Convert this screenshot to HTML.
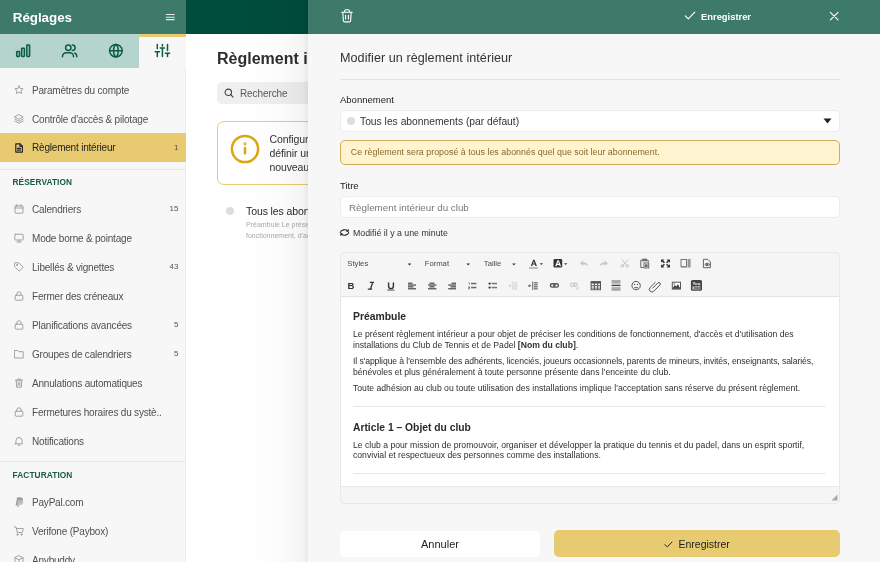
<!DOCTYPE html>
<html><head><meta charset="utf-8">
<style>
*{box-sizing:border-box;margin:0;padding:0}
html,body{width:880px;height:562px;overflow:hidden;background:#fff;-webkit-font-smoothing:antialiased;font-family:"Liberation Sans",sans-serif;color:#333}
.abs{position:absolute}
svg{display:block}
/* sidebar */
#sb{will-change:transform;position:absolute;left:0;top:0;width:186px;height:562px;background:#f7f7f7;border-right:1px solid #ececec}
#sbh{position:absolute;left:0;top:0;width:186px;height:34px;background:#3d7a6a}
#sbh .t{position:absolute;left:12.8px;top:9.6px;font-size:13.4px;font-weight:bold;color:#fff;letter-spacing:-0.05px}
#tabs{position:absolute;left:0;top:34px;width:186px;height:34px;background:#b5d5cc}
#tabs .act{position:absolute;left:139px;top:0;width:47px;height:34px;background:#f7f7f7;border-top:3px solid #e8ca70}
.it{position:absolute;left:0;width:186px;height:29px}
.it .ic{position:absolute;left:14px;top:9px;width:10px;height:10px}
.it .tx{position:absolute;left:32px;top:9px;font-size:10px;letter-spacing:-0.2px;color:#505050;white-space:nowrap}
.it .n{position:absolute;right:7.5px;top:9.5px;font-size:8px;color:#555}
.it.on{background:#e8ca70}
.it.on .tx{color:#222}
.sec{position:absolute;left:12.5px;font-size:8.3px;font-weight:bold;color:#175a4a;letter-spacing:0.1px}
.sep{position:absolute;left:0;width:186px;height:1px;background:#e6e6e6}
/* main */
#mh{position:absolute;left:186px;top:0;width:122px;height:34px;background:#004d3d}
#main{will-change:transform;position:absolute;left:187px;top:34px;width:121px;height:528px;background:#fff;overflow:hidden}
/* modal */
#shadow{position:absolute;left:248px;top:0;width:60px;height:562px;background:linear-gradient(to right,rgba(0,0,0,0) 0px,rgba(0,0,0,0.008) 20px,rgba(0,0,0,0.02) 36px,rgba(0,0,0,0.035) 50px,rgba(0,0,0,0.045) 55px,rgba(0,0,0,0.075) 58px,rgba(0,0,0,0.09) 60px)}
#modal{will-change:transform;position:absolute;left:308px;top:0;width:572px;height:562px;background:#f7f7f7;overflow:hidden}
#mhd{position:absolute;left:0;top:0;width:572px;height:34px;background:#3d7a6a}
.lbl{position:absolute;left:32px;font-size:9.5px;color:#222}
.cl{font-size:8.65px;line-height:10.5px;white-space:nowrap;color:#303030}
.box{position:absolute;left:32px;width:500px;background:#fff;border:1px solid #ececec;border-radius:5px}
</style></head><body>

<!-- SIDEBAR -->
<div id="sb">
  <div id="sbh"><div class="t">Réglages</div>
    <svg class="abs" style="left:165px;top:12px" width="10" height="10" viewBox="0 0 10 10"><path d="M1.3 2.5h8M1.3 5.3h8M1.3 7.6h8" stroke="#fff" stroke-width="1.1" stroke-linecap="round" opacity="0.85"/></svg>
  </div>
  <div id="tabs">
    <div class="act"></div>
    <svg class="abs" style="left:0;top:0" width="186" height="34" viewBox="0 34 186 34" fill="none" stroke="#0e5a4a" stroke-width="1.5" stroke-linecap="round" stroke-linejoin="round">
      <rect x="16.7" y="51.6" width="2.8" height="4.8" rx="0.6" fill="#9cc4b8"/>
      <rect x="21.6" y="48.2" width="2.8" height="8.2" rx="0.6" fill="#9cc4b8"/>
      <rect x="26.8" y="44.9" width="2.8" height="11.5" rx="0.6" fill="#9cc4b8"/>
      <circle cx="68.3" cy="47.7" r="2.7"/>
      <path d="M62.5 56.7v-0.4a3.6 3.6 0 0 1 3.6-3.6h3.8a3.6 3.6 0 0 1 3.6 3.6v0.4"/>
      <path d="M72.4 45a2.7 2.7 0 0 1 0 5.4"/>
      <path d="M74.8 53a3.3 3.3 0 0 1 2 3.2v0.5"/>
      <circle cx="115.9" cy="50.7" r="6.3"/>
      <path d="M109.6 50.7h12.6"/>
      <path d="M115.9 44.4c-3.1 2.2-3.1 10.4 0 12.6c3.1-2.2 3.1-10.4 0-12.6"/>
      <path d="M157.3 44.5v4.2M157.3 51.8v4.8M155.2 51.8h4.2" />
      <path d="M162.4 44.5v1.4M162.4 48v8.6M160.3 48h4.2"/>
      <path d="M167.5 44.5v6M167.5 53.3v3.3M165.4 53.3h4.2"/>
    </svg>
  </div>
  <div class="it" style="top:75.5px"><svg class="ic" viewBox="0 0 10 10" width="10" height="10" fill="none" stroke="#999" stroke-width="0.9" stroke-linecap="round" stroke-linejoin="round"><path d="M5 0.8l1.25 2.6 2.85 0.35-2.1 1.95 0.55 2.8L5 7.1 2.45 8.5 3 5.7 0.9 3.75l2.85-0.35z"/></svg><div class="tx">Paramètres du compte</div></div>
  <div class="it" style="top:104.5px"><svg class="ic" viewBox="0 0 10 10" width="10" height="10" fill="none" stroke="#999" stroke-width="0.9" stroke-linecap="round" stroke-linejoin="round"><path d="M5 0.8L9.2 3 5 5.2 0.8 3z"/><path d="M0.8 5L5 7.2 9.2 5"/><path d="M0.8 7L5 9.2 9.2 7"/></svg><div class="tx">Contrôle d'accès & pilotage</div></div>
  <div class="it on" style="top:133px;height:29px"><svg class="ic" style="top:9.5px" viewBox="0 0 10 10" width="10" height="10" fill="none" stroke="#222" stroke-width="1.15" stroke-linecap="round" stroke-linejoin="round"><path d="M1.8 0.9h4.3l2.3 2.3v5.9h-6.6z"/><path d="M5.9 0.9v2.4h2.4"/><path d="M3.5 5.4h3M3.5 7.1h3"/></svg><div class="tx" style="color:#222;top:9px">Règlement intérieur</div><div class="n">1</div></div>
  <div class="it" style="top:194.5px"><svg class="ic" viewBox="0 0 10 10" width="10" height="10" fill="none" stroke="#999" stroke-width="0.9" stroke-linecap="round" stroke-linejoin="round"><rect x="1" y="1.8" width="8" height="7.4" rx="1"/><path d="M1 4h8M3 0.6v2M7 0.6v2"/></svg><div class="tx">Calendriers</div><div class="n">15</div></div>
  <div class="it" style="top:223.5px"><svg class="ic" viewBox="0 0 10 10" width="10" height="10" fill="none" stroke="#999" stroke-width="0.9" stroke-linecap="round" stroke-linejoin="round"><rect x="0.8" y="1.2" width="8.4" height="5.8" rx="0.8"/><path d="M5 7v1.8M3 9h4"/></svg><div class="tx">Mode borne & pointage</div></div>
  <div class="it" style="top:252.5px"><svg class="ic" viewBox="0 0 10 10" width="10" height="10" fill="none" stroke="#999" stroke-width="0.9" stroke-linecap="round" stroke-linejoin="round"><path d="M0.8 0.8h4l4.4 4.4-4 4L0.8 4.8z"/><circle cx="3" cy="3" r="0.6"/></svg><div class="tx">Libellés & vignettes</div><div class="n">43</div></div>
  <div class="it" style="top:281.5px"><svg class="ic" viewBox="0 0 10 10" width="10" height="10" fill="none" stroke="#999" stroke-width="0.9" stroke-linecap="round" stroke-linejoin="round"><rect x="1.2" y="4.2" width="7.6" height="5" rx="0.8"/><path d="M2.8 4.2V3a2.2 2.2 0 0 1 4.4 0v1.2"/></svg><div class="tx">Fermer des créneaux</div></div>
  <div class="it" style="top:310.5px"><svg class="ic" viewBox="0 0 10 10" width="10" height="10" fill="none" stroke="#999" stroke-width="0.9" stroke-linecap="round" stroke-linejoin="round"><rect x="1.2" y="4.2" width="7.6" height="5" rx="0.8"/><path d="M2.8 4.2V3a2.2 2.2 0 0 1 4.4 0v1.2"/></svg><div class="tx">Planifications avancées</div><div class="n">5</div></div>
  <div class="it" style="top:339.5px"><svg class="ic" viewBox="0 0 10 10" width="10" height="10" fill="none" stroke="#999" stroke-width="0.9" stroke-linecap="round" stroke-linejoin="round"><path d="M0.8 1.5h3l1 1.2h4.4v6.3H0.8z"/></svg><div class="tx">Groupes de calendriers</div><div class="n">5</div></div>
  <div class="it" style="top:368.5px"><svg class="ic" viewBox="0 0 10 10" width="10" height="10" fill="none" stroke="#999" stroke-width="0.9" stroke-linecap="round" stroke-linejoin="round"><path d="M1.5 2.2h7M3.7 2.2V1h2.6v1.2M2.2 2.2l0.4 7h4.8l0.4-7M4.2 4v3.5M5.8 4v3.5"/></svg><div class="tx">Annulations automatiques</div></div>
  <div class="it" style="top:397.5px"><svg class="ic" viewBox="0 0 10 10" width="10" height="10" fill="none" stroke="#999" stroke-width="0.9" stroke-linecap="round" stroke-linejoin="round"><rect x="1.2" y="4.2" width="7.6" height="5" rx="0.8"/><path d="M2.8 4.2V3a2.2 2.2 0 0 1 4.4 0v1.2"/></svg><div class="tx">Fermetures horaires du systè..</div></div>
  <div class="it" style="top:426.5px"><svg class="ic" viewBox="0 0 10 10" width="10" height="10" fill="none" stroke="#999" stroke-width="0.9" stroke-linecap="round" stroke-linejoin="round"><path d="M2 7V4.5a3 3 0 0 1 6 0V7l0.8 0.8H1.2z"/><path d="M4 9.2h2"/></svg><div class="tx">Notifications</div></div>
  <div class="it" style="top:487.5px"><svg class="ic" viewBox="0 0 10 10" width="10" height="10"><path d="M1.6 8.6L3.1 0.2H6.4C8.4 0.2 9.3 1.3 9 3C8.7 4.9 7.4 5.7 5.6 5.7H4.5L4 8.6Z" fill="#a0a0a0"/><path d="M2.9 9.9L4.1 3.2H7C8.8 3.2 9.6 4.1 9.3 5.6C9 7.2 7.9 7.9 6.3 7.9H5.3L4.9 9.9Z" fill="#bdbdbd" opacity="0.9"/></svg><div class="tx">PayPal.com</div></div>
  <div class="it" style="top:516.5px"><svg class="ic" viewBox="0 0 10 10" width="10" height="10" fill="none" stroke="#999" stroke-width="0.9" stroke-linecap="round" stroke-linejoin="round"><path d="M0.5 1h1.5l1.2 5.5h5L9.3 2.5H2.4"/><circle cx="3.5" cy="8.6" r="0.7"/><circle cx="7.5" cy="8.6" r="0.7"/></svg><div class="tx">Verifone (Paybox)</div></div>
  <div class="it" style="top:545.5px"><svg class="ic" viewBox="0 0 10 10" width="10" height="10" fill="none" stroke="#999" stroke-width="0.9" stroke-linecap="round" stroke-linejoin="round"><path d="M5 0.8l4 2v4.6l-4 2-4-2V2.8z"/><path d="M1 2.8l4 2 4-2M5 4.8v4.6"/></svg><div class="tx">Anybuddy</div></div>
  <div class="sep" style="top:169px"></div>
  <div class="sec" style="top:177px">RÉSERVATION</div>
  <div class="sep" style="top:461px"></div>
  <div class="sec" style="top:470px">FACTURATION</div>
</div>

<!-- MAIN -->
<div id="mh"></div>
<div id="main">
  <div class="abs" style="left:30px;top:15.5px;font-size:16px;font-weight:bold;color:#2e2e2e;white-space:nowrap;letter-spacing:0px">Règlement intérieur</div>
  <div class="abs" style="left:30px;top:48px;width:200px;height:22px;background:#efefef;border-radius:5px">
    <svg class="abs" style="left:7px;top:6px" width="10" height="10" viewBox="0 0 10 10" fill="none" stroke="#444" stroke-width="1.1" stroke-linecap="round"><circle cx="4.3" cy="4.3" r="3.2"/><path d="M6.7 6.7L9 9"/></svg>
    <div class="abs" style="left:23px;top:5.5px;font-size:10px;color:#5a5a5a;letter-spacing:-0.1px">Recherche</div>
  </div>
  <div class="abs" style="left:30px;top:87px;width:200px;height:64px;border:1px solid #e8ca70;border-radius:7px;background:#fff">
    <svg class="abs" style="left:12px;top:12px" width="30" height="30" viewBox="0 0 30 30" fill="none" stroke="#dba60f" stroke-width="2.5" stroke-linecap="round"><circle cx="15" cy="15" r="13.1"/><path d="M15 14v5.2"/><circle cx="15" cy="9.8" r="0.5" stroke-width="2.3"/></svg>
    <div class="abs" style="left:51.5px;top:10px;font-size:10.5px;line-height:14px;color:#333;white-space:nowrap;letter-spacing:-0.1px">Configurez<br>définir un<br>nouveau</div>
  </div>
  <div class="abs" style="left:39px;top:173px;width:8px;height:8px;border-radius:50%;background:#ddd"></div>
  <div class="abs" style="left:59px;top:171px;font-size:10.5px;color:#2a2a2a;white-space:nowrap;letter-spacing:-0.1px">Tous les abonnements</div>
  <div class="abs" style="left:59px;top:186px;font-size:7px;line-height:10.8px;color:#aaa;white-space:nowrap">Préambule Le présent<br>fonctionnement, d'accès</div>
</div>

<!-- MODAL -->
<div id="shadow"></div>
<div id="modal">
  <div id="mhd">
    <svg class="abs" style="left:33px;top:9px" width="12" height="14" viewBox="0 0 12 14" fill="none" stroke="#fff" stroke-width="1.1" stroke-linecap="round" stroke-linejoin="round"><path d="M0.7 3.2h10.6M3.6 3.2V2a1.2 1.2 0 0 1 1.2-1.2h2.4A1.2 1.2 0 0 1 8.4 2v1.2M1.8 3.2l0.6 8.6a1.2 1.2 0 0 0 1.2 1.1h4.8a1.2 1.2 0 0 0 1.2-1.1l0.6-8.6M4.6 6.2v3.8M7.4 6.2v3.8"/></svg>
    <svg class="abs" style="left:376px;top:11px" width="12" height="9" viewBox="0 0 12 9" fill="none" stroke="#fff" stroke-width="1.15" stroke-linecap="round" stroke-linejoin="round"><path d="M1.3 4.8l3 3L10.8 1.2"/></svg>
    <div class="abs" style="left:393px;top:11px;font-size:9.4px;font-weight:bold;color:#fff;letter-spacing:0px">Enregistrer</div>
    <svg class="abs" style="left:521px;top:11px" width="10" height="10" viewBox="0 0 10 10" fill="none" stroke="#fff" stroke-width="1.1" stroke-linecap="round"><path d="M1.4 1.3l7.6 7.6M9 1.3L1.4 8.9"/></svg>
  </div>
  <div class="abs" style="left:32px;top:50.7px;font-size:12.6px;color:#333;white-space:nowrap;letter-spacing:0.05px">Modifier un règlement intérieur</div>
  <div class="abs" style="left:32px;top:79px;width:500px;height:1px;background:#e2e2e2"></div>
  <div class="lbl" style="top:93.5px">Abonnement</div>
  <div class="box" style="top:109.5px;height:22px">
    <div class="abs" style="left:6.3px;top:6.5px;width:8px;height:8px;border-radius:50%;background:#ddd"></div>
    <div class="abs" style="left:19px;top:5.5px;font-size:10.3px;color:#333;white-space:nowrap">Tous les abonnements (par défaut)</div>
    <svg class="abs" style="left:482px;top:7px" width="9" height="6" viewBox="0 0 9 6"><path d="M0.5 0.5h8L4.5 5.5z" fill="#222"/></svg>
  </div>
  <div class="abs" style="left:32px;top:139.5px;width:500px;height:25px;background:#fff4cf;border:1.7px solid #d2a95a;border-radius:5px">
    <div class="abs" style="left:9.8px;top:6.6px;font-size:8.9px;color:#8a6a2c;white-space:nowrap">Ce règlement sera proposé à tous les abonnés quel que soit leur abonnement.</div>
  </div>
  <div class="lbl" style="top:180px">Titre</div>
  <div class="box" style="top:196px;height:22px">
    <div class="abs" style="left:8px;top:5px;font-size:9.8px;color:#777;white-space:nowrap">Règlement intérieur du club</div>
  </div>
  <svg class="abs" style="left:31px;top:227.5px" width="11" height="9" viewBox="0 0 11 9"><g fill="none" stroke="#222" stroke-width="1.05" stroke-linecap="round"><path d="M1.3 4.6C1.8 1.9 6.6 0.6 8.8 2.9"/><path d="M9.7 4.4C9.2 7.1 4.4 8.4 2.2 6.1"/></g><path d="M9.9 0.9L9.5 3.9L6.6 3.3z" fill="#222"/><path d="M1.1 8.1L1.5 5.1L4.4 5.7z" fill="#222"/></svg>
  <div class="abs" style="left:45px;top:227.6px;font-size:8.8px;color:#333;white-space:nowrap">Modifié il y a une minute</div>
  <div id="ed" class="abs" style="left:32px;top:252px;width:500px;height:252px;border:1px solid #e8e8e8;border-radius:4px;background:#f5f5f5;overflow:hidden">
    
    <div class="abs" style="left:0;top:43px;width:498px;height:191px;background:#fff;border-top:1px solid #e4e4e4;border-bottom:1px solid #e9e9e9">
      <div id="content" style="position:absolute;left:12px;top:0;width:480px;color:#2a2a2a">
        <div class="abs" style="top:13.5px;font-size:10.4px;font-weight:bold;white-space:nowrap">Préambule</div>
        <div class="abs cl" style="top:32px">Le présent règlement intérieur a pour objet de préciser les conditions de fonctionnement, d'accès et d'utilisation des<br>installations du Club de Tennis et de Padel <b>[Nom du club]</b>.</div>
        <div class="abs cl" style="top:59px"><span style="letter-spacing:-0.095px">Il s'applique à l'ensemble des adhérents, licenciés, joueurs occasionnels, parents de mineurs, invités, enseignants, salariés,</span><br>bénévoles et plus généralement à toute personne présente dans l'enceinte du club.</div>
        <div class="abs cl" style="top:86px">Toute adhésion au club ou toute utilisation des installations implique l'acceptation sans réserve du présent règlement.</div>
        <div class="abs" style="left:0;top:109px;width:473px;height:1px;background:#e8e8e8"></div>
        <div class="abs" style="top:124.5px;font-size:10.3px;font-weight:bold;white-space:nowrap">Article 1 – Objet du club</div>
        <div class="abs cl" style="top:142.6px">Le club a pour mission de promouvoir, organiser et développer la pratique du tennis et du padel, dans un esprit sportif,<br>convivial et respectueux des personnes comme des installations.</div>
        <div class="abs" style="left:0;top:176px;width:473px;height:1px;background:#e8e8e8"></div>
      </div>
    </div>
    <svg class="abs" style="left:490px;top:241px" width="7" height="7" viewBox="0 0 7 7"><path d="M6.5 0.5V6.5H0.5z" fill="#aaa"/></svg>
  </div>
  <div class="abs" style="left:32px;top:530.5px;width:200px;height:26px;background:#fff;border-radius:5px">
    <div class="abs" style="left:0;width:200px;top:7.5px;text-align:center;font-size:11px;color:#222">Annuler</div>
  </div>
  <div class="abs" style="left:246px;top:530px;width:286px;height:27px;background:#e8ca70;border-radius:5px">
    <svg class="abs" style="left:110px;top:10.8px" width="9" height="7" viewBox="0 0 9 7" fill="none" stroke="#222" stroke-width="0.95" stroke-linecap="round" stroke-linejoin="round"><path d="M0.9 3.6l2.4 2.4L8 1"/></svg>
    <div class="abs" style="left:124.5px;top:8px;font-size:10.5px;color:#222">Enregistrer</div>
  </div>
</div>
<svg class="abs" style="left:330px;top:250px;z-index:5;will-change:transform" width="520" height="50" viewBox="330 250 520 50" font-family="Liberation Sans, sans-serif">
  <g font-size="7.7" fill="#4a4a4a">
    <text x="347.3" y="266.2">Styles</text>
    <text x="424.7" y="266.2">Format</text>
    <text x="483.8" y="266.2">Taille</text>
  </g>
  <g fill="#333">
    <path d="M407.7 263.4h3.6l-1.8 2.2z"/>
    <path d="M466.4 263.4h3.6l-1.8 2.2z"/>
    <path d="M512.1 263.4h3.6l-1.8 2.2z"/>
    <path d="M539.8 263.2h3.2l-1.6 1.9z"/>
    <path d="M564.1 263.2h3.2l-1.6 1.9z"/>
  </g>
  <!-- text color A -->
  <path d="M530.8 266l2.4-6.2h1.3l2.4 6.2h-1.5l-0.5-1.4h-2.2l-0.5 1.4z M533 263.5h1.6l-0.8-2.3z" fill="#333" fill-rule="evenodd"/>
  <rect x="529" y="267.3" width="9" height="1.4" fill="#a8a8a8"/>
  <!-- bg color -->
  <rect x="553.5" y="259" width="8.7" height="8.6" rx="1.3" fill="#333"/>
  <path d="M555.2 266.3l2.3-6h1.3l2.3 6h-1.4l-0.5-1.4h-2.1l-0.5 1.4z M557.4 263.8h1.5l-0.75-2.2z" fill="#fff" fill-rule="evenodd"/>
  <!-- undo / redo -->
  <path d="M579.8 263.2l3.3-2.6v1.6c2.8 0 4.8 1.5 5.2 4.1c-1-1.3-2.6-1.9-5.2-1.9v1.6z" fill="#c9c9c9"/>
  <path d="M608 263.2l-3.3-2.6v1.6c-2.8 0-4.8 1.5-5.2 4.1c1-1.3 2.6-1.9 5.2-1.9v1.6z" fill="#c9c9c9"/>
  <!-- cut -->
  <g fill="none" stroke="#c4c4c4" stroke-width="1">
    <path d="M621.8 259.6l4.6 5.6M627.8 259.6l-4.6 5.6"/>
    <circle cx="622.3" cy="266" r="1.3"/><circle cx="627.3" cy="266" r="1.3"/>
  </g>
  <!-- paste -->
  <g fill="none" stroke="#666" stroke-width="1">
    <path d="M642.6 260.2h-1.8v7.3h2.6"/><path d="M646.6 260.2h1.6v2.2"/>
    <rect x="642.8" y="259.2" width="3.6" height="1.6" fill="#666"/>
    <rect x="644" y="263" width="4.7" height="4.9" fill="#fff"/>
    <path d="M645 264.3h2.7v2.6h-2.7z" fill="#666" stroke="none"/>
  </g>
  <!-- maximize -->
  <g fill="#333">
    <path d="M661 259.4h3.4l-3.4 3.4z"/><path d="M670 259.4h-3.4l3.4 3.4z"/>
    <path d="M661 267.6h3.4l-3.4-3.4z"/><path d="M670 267.6h-3.4l3.4-3.4z"/>
  </g>
  <g stroke="#333" stroke-width="1.5" fill="none">
    <path d="M662.4 260.8l2 2M668.6 260.8l-2 2M662.4 266.2l2-2M668.6 266.2l-2-2"/>
  </g>
  <!-- showblocks -->
  <g>
    <rect x="681" y="259.5" width="5.5" height="7" fill="none" stroke="#777" stroke-width="1"/>
    <rect x="687.6" y="259" width="3" height="8.5" fill="#999"/>
    <rect x="681" y="266" width="6" height="1.6" fill="#888"/>
  </g>
  <!-- preview -->
  <g fill="none" stroke="#555" stroke-width="0.9">
    <path d="M703.4 259.3h4.4l2.6 2.6v5.8h-7z"/>
    <path d="M704.8 264.5c1.4-1.6 3.6-1.6 5 0c-1.4 1.6-3.6 1.6-5 0z"/>
    <circle cx="707.3" cy="264.5" r="0.6" fill="#555"/>
  </g>

  <!-- row 2 -->
  <text x="347.6" y="289.2" font-size="9.6" font-weight="bold" fill="#333">B</text>
  <path d="M369.8 282.4h4.2M367.8 289.2h4.2M372.7 282.4l-2.3 6.8" fill="none" stroke="#333" stroke-width="1.3"/>
  <path d="M388.6 282.4v3.8a2.4 2.4 0 0 0 4.8 0v-3.8" fill="none" stroke="#333" stroke-width="1.4"/>
  <rect x="387.2" y="289.6" width="7.3" height="0.9" fill="#444"/>
  <g fill="#555">
    <rect x="408" y="282.6" width="4.5" height="1.3"/><rect x="408" y="284.4" width="8" height="1.3"/><rect x="408" y="286.2" width="5.5" height="1.3"/><rect x="408" y="288.1" width="8" height="1.3"/>
    <rect x="429.5" y="282.6" width="5" height="1.3"/><rect x="428" y="284.4" width="8.4" height="1.3"/><rect x="429.5" y="286.2" width="5" height="1.3"/><rect x="428" y="288.1" width="8.4" height="1.3"/>
    <rect x="451.5" y="282.6" width="4.5" height="1.3"/><rect x="448.2" y="284.4" width="7.8" height="1.3"/><rect x="450.5" y="286.2" width="5.5" height="1.3"/><rect x="448.2" y="288.1" width="7.8" height="1.3"/>
  </g>
  <!-- numbered list -->
  <g fill="#666">
    <rect x="471" y="282.8" width="5.4" height="1.5"/><rect x="471" y="286.8" width="5.4" height="1.5"/>
    <path d="M468.6 282.5h1.3v2.3h-0.6v-1.6h-0.7z"/>
    <path d="M468.2 286.6h1.7v1.2l-1 0.8h1v0.6h-1.8v-0.6l1-0.8h-0.9z"/>
  </g>
  <!-- bullet list -->
  <g fill="#333">
    <circle cx="489.6" cy="283.6" r="1.15"/><circle cx="489.6" cy="287.6" r="1.15"/>
  </g>
  <g fill="#777"><rect x="491.6" y="282.8" width="5.4" height="1.5"/><rect x="491.6" y="286.8" width="5.4" height="1.5"/></g>
  <!-- outdent light -->
  <g fill="#d0d0d0">
    <rect x="512.3" y="281.5" width="0.9" height="8.6"/>
    <rect x="513.8" y="282.3" width="3.5" height="1.1"/><rect x="513.8" y="284.3" width="3.5" height="1.1"/><rect x="513.8" y="286.3" width="3.5" height="1.1"/><rect x="513.8" y="288.3" width="3.5" height="1.1"/>
    <path d="M508.2 285.8l2.6-1.7v3.4z"/>
  </g>
  <!-- indent -->
  <g fill="#555">
    <rect x="532.3" y="281.5" width="0.9" height="8.6"/>
    <rect x="534" y="282.3" width="3.7" height="1.1"/><rect x="534" y="284.3" width="3.7" height="1.1"/><rect x="534" y="286.3" width="3.7" height="1.1"/><rect x="534" y="288.3" width="3.7" height="1.1"/>
    <rect x="528" y="285.3" width="1.4" height="1"/>
    <path d="M531.3 285.8l-2-1.5v3z"/>
  </g>
  <!-- link -->
  <g fill="none" stroke="#555" stroke-width="1.4">
    <rect x="550.4" y="283.7" width="4.6" height="3.4" rx="1.7"/><rect x="553.8" y="283.7" width="4.6" height="3.4" rx="1.7"/>
  </g>
  <!-- unlink light -->
  <g fill="none" stroke="#cdcdcd" stroke-width="1.3">
    <rect x="570.4" y="283.2" width="4.4" height="3.2" rx="1.6"/><rect x="573.6" y="283.2" width="3.6" height="3.2" rx="1.6"/>
    <path d="M576 287.3l2.6 2.6M578.6 287.3l-2.6 2.6" stroke-width="1"/>
  </g>
  <!-- table -->
  <rect x="590.6" y="281.1" width="10.4" height="9.1" fill="#555"/>
  <g fill="#fff">
    <rect x="591.6" y="283.6" width="2.3" height="1.6"/><rect x="594.9" y="283.6" width="2.3" height="1.6"/><rect x="598.2" y="283.6" width="1.8" height="1.6"/>
    <rect x="591.6" y="286.2" width="2.3" height="1.5"/><rect x="594.9" y="286.2" width="2.3" height="1.5"/><rect x="598.2" y="286.2" width="1.8" height="1.5"/>
    <rect x="591.6" y="288.5" width="2.3" height="0.8"/><rect x="594.9" y="288.5" width="2.3" height="0.8"/><rect x="598.2" y="288.5" width="1.8" height="0.8"/>
  </g>
  <!-- hr -->
  <rect x="611.6" y="280" width="8.9" height="3.6" fill="#a9a9a9"/>
  <rect x="611.6" y="284.7" width="8.9" height="1.4" fill="#444"/>
  <rect x="611.6" y="287.2" width="8.9" height="3.6" fill="#a9a9a9"/>
  <!-- smiley -->
  <g fill="none" stroke="#555" stroke-width="1">
    <circle cx="636.1" cy="285.6" r="4.2"/>
    <path d="M634.2 287.7h3.8"/>
  </g>
  <circle cx="634.6" cy="284.4" r="0.7" fill="#555"/><circle cx="637.6" cy="284.4" r="0.7" fill="#555"/>
  <!-- attach -->
  <path d="M652.5 288.3l5.5-5.5a1.5 1.5 0 0 1 2.1 2.1l-6.3 6.3a2.6 2.6 0 0 1-3.7-3.7l5.4-5.4" fill="none" stroke="#555" stroke-width="1"/>
  <!-- image -->
  <rect x="671.8" y="281.7" width="9.2" height="7.9" fill="#555"/>
  <rect x="672.8" y="282.7" width="7.2" height="5.2" fill="#fff"/>
  <path d="M672.8 287.9l2-2.8 1.5 1.4 1.6-2.4 2.1 3.8z" fill="#444"/>
  <circle cx="674.2" cy="284" r="0.7" fill="#555"/>
  <!-- youtube -->
  <rect x="690.9" y="280" width="11.1" height="10.8" rx="1.6" fill="#444"/>
  <rect x="692.4" y="286" width="8.1" height="3.6" rx="0.6" fill="#bbb"/>
  <text x="692.4" y="284.9" font-size="4.4" font-weight="bold" fill="#fff">You</text>
  <text x="693.2" y="289.1" font-size="3.4" font-weight="bold" fill="#444">Tube</text>
</svg>
</body></html>
